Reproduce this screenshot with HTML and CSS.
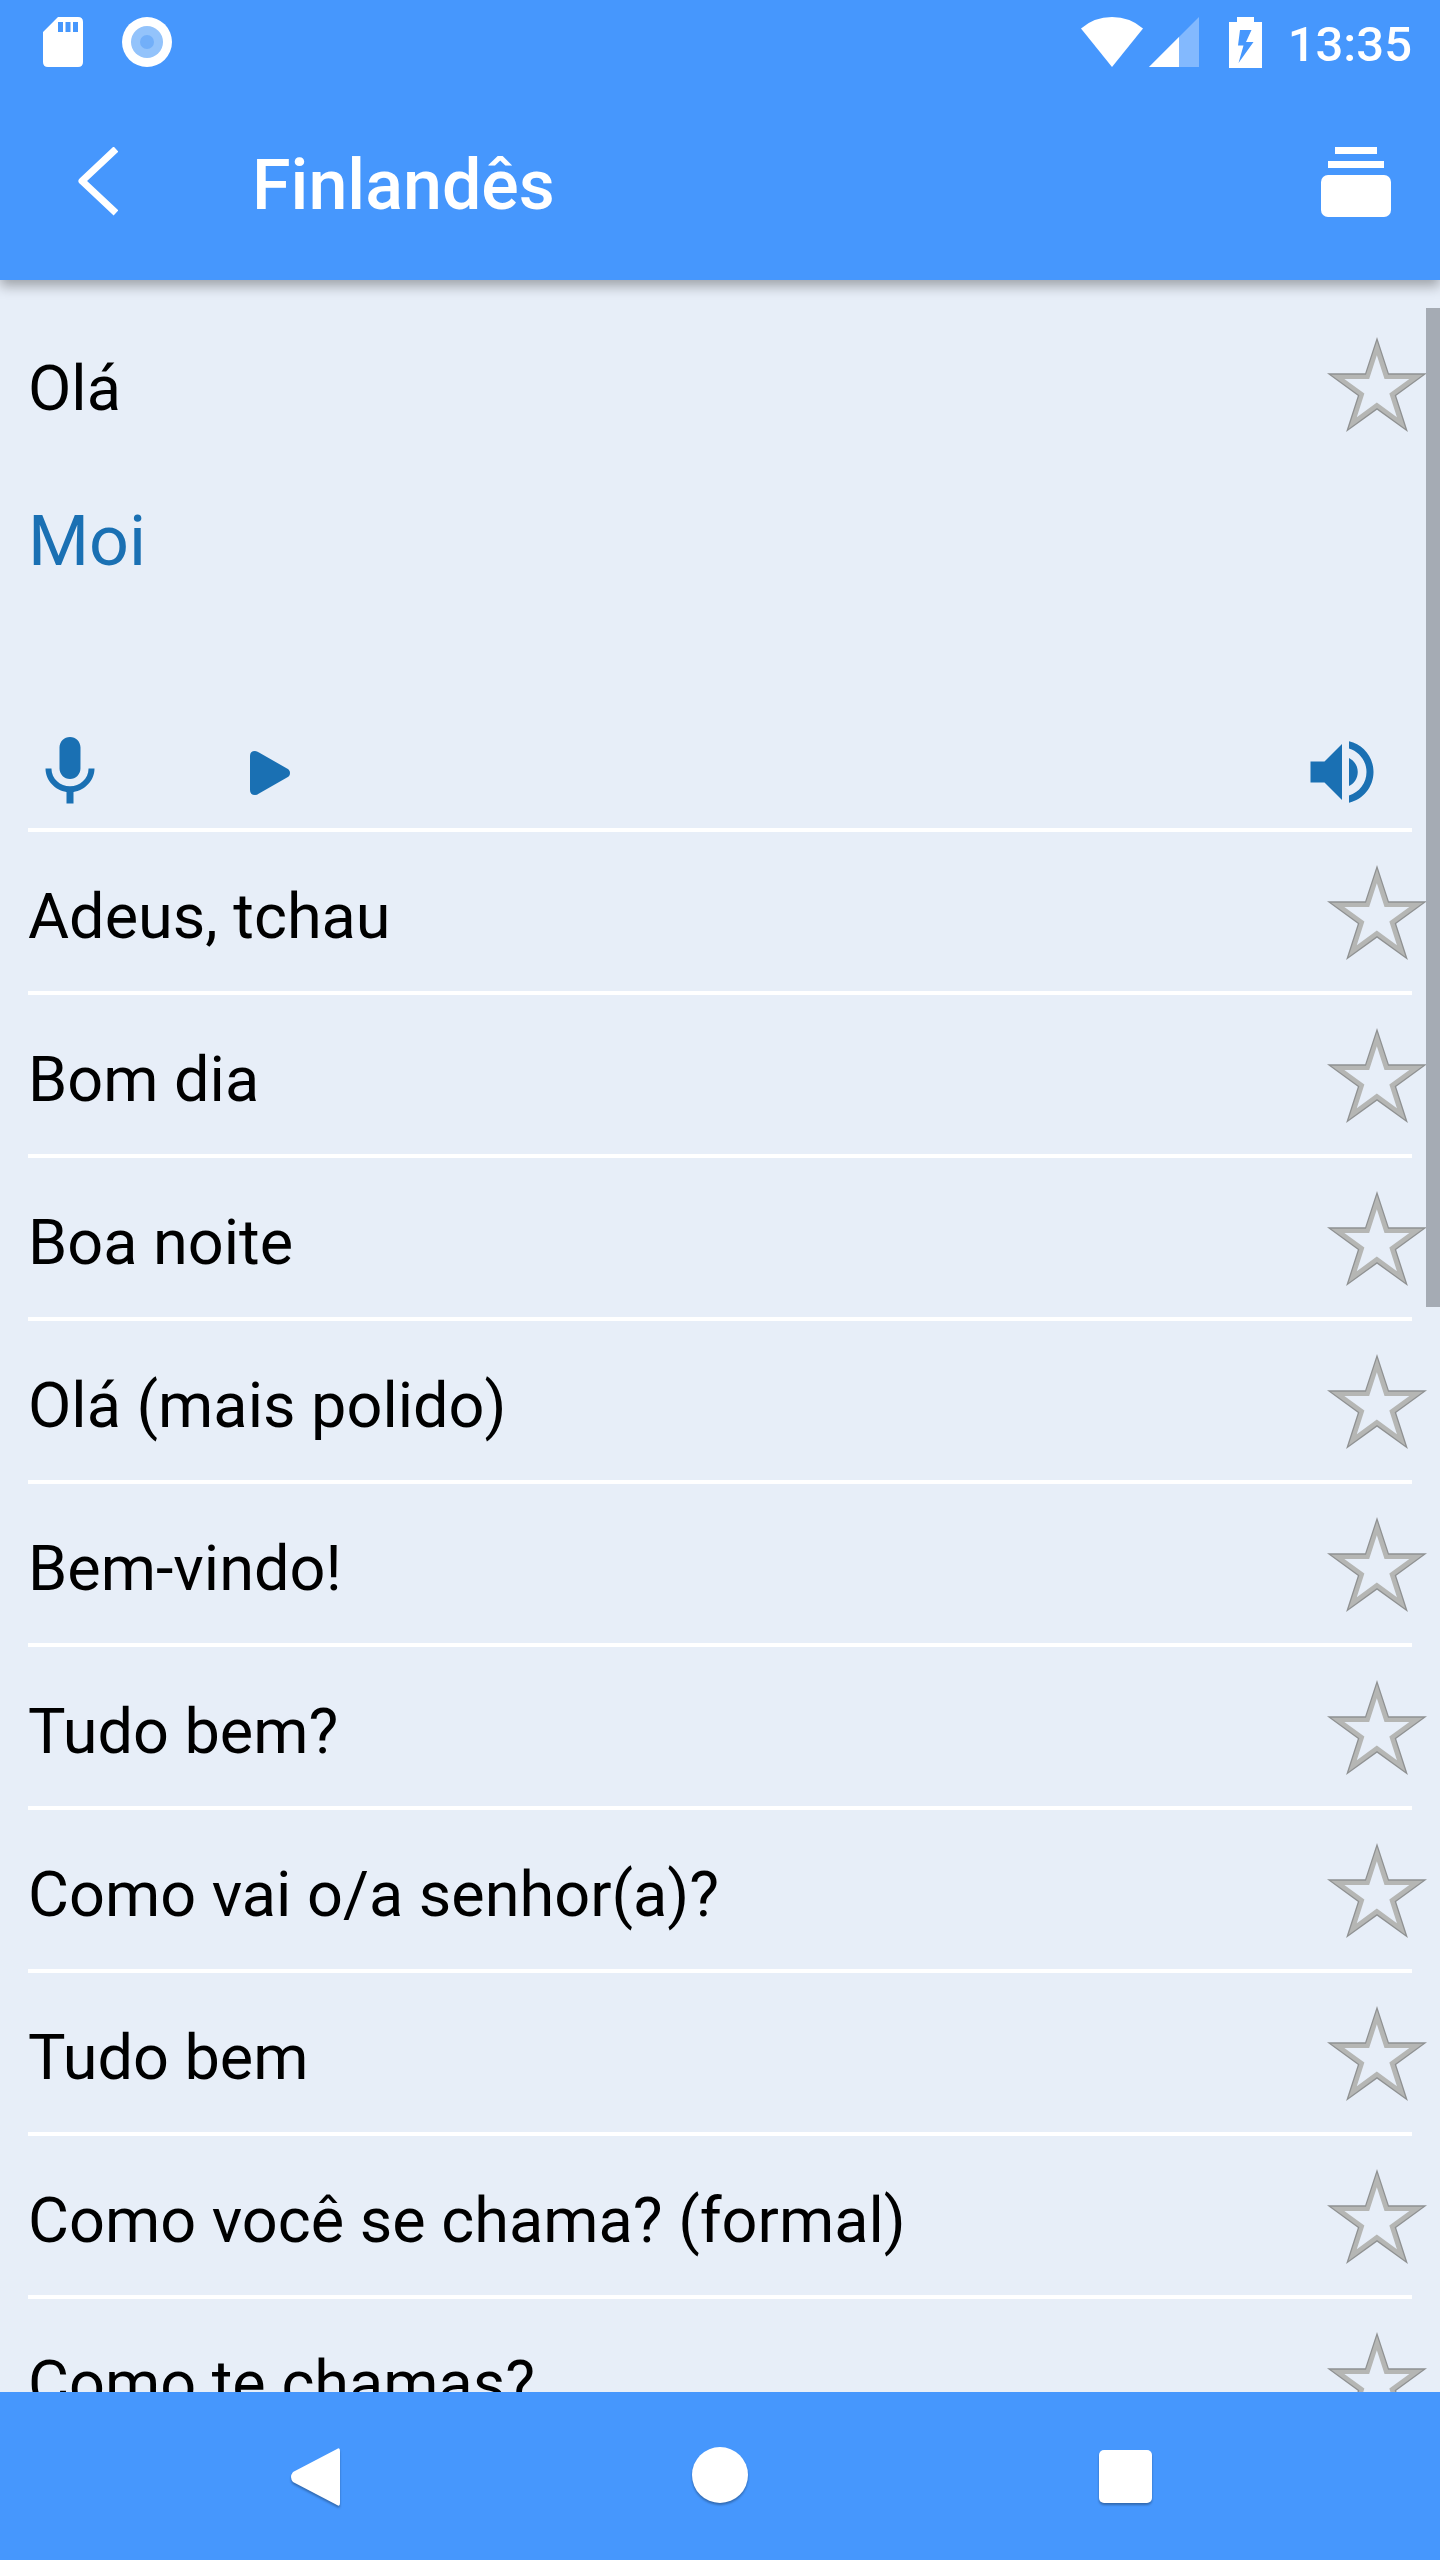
FILE: index.html
```html
<!DOCTYPE html>
<html lang="pt">
<head>
    <meta charset="UTF-8">
    <meta name="viewport" content="width=device-width, initial-scale=1.0">
    <title>Finlandês</title>
    <link rel="stylesheet" href="styles.css">
</head>
<body>
    <!-- Shared star outline -->
    <svg class="defs" aria-hidden="true">
        <symbol id="star" viewBox="0 0 98 98">
            <path fill="#8f9192" d="M49 0 60.6 35.6H98L67.8 57.6 79.3 93.200 49 71.200 18.700 93.200 30.200 57.600 0 35.600H37.400Z"/>
            <path fill="#b5b6b4" d="M49 4 59.800 37H94L66.300 57.100 76.900 89.900 49 69.700 21.100 89.900 31.700 57.100 4 37H38.200Z"/>
            <path fill="#e7eef8" transform="translate(17 18) scale(.65)" d="M49 0 60.6 35.6H98L67.8 57.6 79.3 93.200 49 71.200 18.700 93.200 30.200 57.600 0 35.600H37.400Z"/>
        </symbol>
    </svg>

    <header>
        <div class="status">
            <svg class="sd" width="40" height="50" viewBox="0 0 40 50"><path fill="#fff" fill-rule="evenodd" d="M15 0H35Q40 0 40 5V45Q40 50 35 50H5Q0 50 0 45V15ZM15 5V15H20V5ZM22.500 5V15H27.500V5ZM30 5V15H35V5Z"/></svg>
            <svg class="sync" width="50" height="50" viewBox="0 0 50 50"><circle cx="25" cy="25" r="25" fill="#fff"/><circle cx="25" cy="25" r="16" fill="#93c3fb"/><circle cx="25" cy="25" r="7" fill="#72aff9"/></svg>
            <svg class="wifi" width="62" height="50" viewBox="0 0 62 50"><path fill="#fff" d="M31 50 0 11.500Q13 0 31 0T62 11.500Z"/></svg>
            <svg class="signal" width="50" height="50" viewBox="0 0 50 50"><path fill="#83b9fe" d="M50 0V50H0Z"/><path fill="#fff" d="M30 20V50H0Z"/></svg>
            <svg class="battery" width="33" height="51" viewBox="0 0 33 51"><path fill="#fff" fill-rule="evenodd" d="M8 0H25V5H33V51H0V5H8ZM11 13 9 28.500H14.500L9.500 46 24.500 25H17L22.500 13Z"/></svg>
            <span class="time">13:35</span>
        </div>
        <div class="toolbar">
            <button type="button" class="back" aria-label="Voltar">
                <svg width="40" height="70" viewBox="0 0 40 70"><path fill="none" stroke="#fff" stroke-width="7" stroke-linejoin="round" d="M38 2 4 34 38 66"/></svg>
            </button>
            <h1>Finlandês</h1>
            <button type="button" class="cards" aria-label="Cartões">
                <svg width="70" height="70" viewBox="0 0 70 70"><path fill="#fff" d="M14 0H56V7H14ZM7 14H63V21H7Z"/><rect y="28" width="70" height="42" rx="7" fill="#fff"/></svg>
            </button>
        </div>
    </header>

    <main>
        <ul>
            <li class="open">
                <div class="phrase"><span>Olá</span><button type="button" aria-label="Favorito"><svg><use href="#star"/></svg></button></div>
                <p class="translation">Moi</p>
                <div class="actions">
                    <button type="button" aria-label="Gravar"><svg viewBox="0 0 24 24"><path d="M12 14c1.660 0 2.990-1.340 2.990-3L15 5c0-1.660-1.340-3-3-3S9 3.340 9 5v6c0 1.660 1.340 3 3 3zm5.300-3c0 3-2.540 5.100-5.300 5.100S6.700 14 6.700 11H5c0 3.410 2.720 6.230 6 6.720V21h2v-3.280c3.280-.48 6-3.300 6-6.720h-1.700z"/></svg></button>
                    <button type="button" aria-label="Reproduzir"><svg viewBox="0 0 84 84"><path d="M22 26Q22 21 27 21Q29 21 31 22.500L59 38.500Q62 40 62 43T59 47.500L31 63.500Q29 65 27 65Q22 65 22 60Z"/></svg></button>
                    <button type="button" class="listen" aria-label="Ouvir"><svg viewBox="0 0 24 24"><path d="M3 9v6h4l5 5V4L7 9H3zm13.500 3c0-1.770-1.020-3.290-2.500-4.030v8.050c1.480-.73 2.500-2.250 2.500-4.020zM14 3.230v2.060c2.890.86 5 3.540 5 6.710s-2.110 5.850-5 6.710v2.060c4.010-.91 7-4.490 7-8.770s-2.990-7.860-7-8.770z"/></svg></button>
                </div>
            </li>
            <li><div class="phrase"><span>Adeus, tchau</span><button type="button" aria-label="Favorito"><svg><use href="#star"/></svg></button></div></li>
            <li><div class="phrase"><span>Bom dia</span><button type="button" aria-label="Favorito"><svg><use href="#star"/></svg></button></div></li>
            <li><div class="phrase"><span>Boa noite</span><button type="button" aria-label="Favorito"><svg><use href="#star"/></svg></button></div></li>
            <li><div class="phrase"><span>Olá (mais polido)</span><button type="button" aria-label="Favorito"><svg><use href="#star"/></svg></button></div></li>
            <li><div class="phrase"><span>Bem-vindo!</span><button type="button" aria-label="Favorito"><svg><use href="#star"/></svg></button></div></li>
            <li><div class="phrase"><span>Tudo bem?</span><button type="button" aria-label="Favorito"><svg><use href="#star"/></svg></button></div></li>
            <li><div class="phrase"><span>Como vai o/a senhor(a)?</span><button type="button" aria-label="Favorito"><svg><use href="#star"/></svg></button></div></li>
            <li><div class="phrase"><span>Tudo bem</span><button type="button" aria-label="Favorito"><svg><use href="#star"/></svg></button></div></li>
            <li><div class="phrase"><span>Como você se chama? (formal)</span><button type="button" aria-label="Favorito"><svg><use href="#star"/></svg></button></div></li>
            <li><div class="phrase"><span>Como te chamas?</span><button type="button" aria-label="Favorito"><svg><use href="#star"/></svg></button></div></li>
        </ul>
        <div class="scrollbar"></div>
    </main>

    <nav>
        <button type="button" aria-label="Voltar"><svg viewBox="0 0 84 84"><path d="M65 17V69Q65 73 62 71L18 48Q14 43 18 38L62 15Q65 13 65 17Z"/></svg></button>
        <button type="button" aria-label="Início"><svg viewBox="0 0 84 84"><circle cx="42" cy="41" r="28"/></svg></button>
        <button type="button" aria-label="Recentes"><svg viewBox="0 0 84 84"><rect x="18" y="16" width="53" height="53" rx="5"/></svg></button>
    </nav>
</body>
</html>
```

FILE: styles.css
```css
body {
    font-family: Roboto, sans-serif;
    background-color: #e7eef8;
    color: #000;
    margin: 0;
    display: flex;
    flex-direction: column;
    height: 100vh;
    overflow: hidden;
}

button {
    display: flex;
    padding: 0;
    border: none;
    background: none;
    cursor: pointer;
}

svg {
    display: block;
}

.defs {
    position: absolute;
    width: 0;
    height: 0;
}

header {
    position: relative;
    z-index: 1;
    flex: none;
    background-color: #4697fd;
    color: #fff;
    box-shadow: 0 6px 12px rgba(0, 0, 0, 0.32);
}

.status {
    display: flex;
    align-items: center;
    height: 84px;
    padding: 0 28px 0 43px;
}

.sync {
    margin-left: 39px;
}

.wifi {
    margin-left: auto;
}

.signal {
    margin-left: 6px;
}

.battery {
    margin-left: 30px;
}

.time {
    margin-left: 26px;
    padding-top: 4px;
    font-size: 49px;
    font-weight: 500;
}

.toolbar {
    display: flex;
    align-items: center;
    height: 196px;
    padding: 0 49px 0 78px;
}

h1 {
    margin: 0 0 0 134px;
    padding-top: 6px;
    font-size: 70px;
    font-weight: 500;
}

.cards {
    margin-left: auto;
}

main {
    position: relative;
    flex: 1;
    min-height: 0;
    overflow: hidden;
}

ul {
    list-style: none;
    margin: 0;
    padding: 24px 28px 0;
}

li {
    border-bottom: 4px solid #fff;
}

.phrase {
    display: flex;
    align-items: center;
    justify-content: space-between;
    box-sizing: border-box;
    height: 159px;
    padding-top: 6px;
    margin-right: -15px;
    font-size: 63px;
}

.phrase span {
    padding-top: 4px;
}

.phrase svg {
    width: 100px;
    height: 100px;
}

.translation {
    margin: 36px 0 147px;
    font-size: 70px;
    line-height: 84px;
    color: #1a70b3;
}

.actions {
    display: flex;
    gap: 116px;
    padding: 0 28px 14px 0;
    fill: #1a70b3;
}

.actions svg {
    width: 84px;
    height: 84px;
}

.listen {
    margin-left: auto;
}

.scrollbar {
    position: absolute;
    top: 28px;
    right: 0;
    width: 14px;
    height: 47.3%;
    background-color: #a5abb4;
}

nav {
    display: flex;
    flex: none;
    align-items: center;
    justify-content: center;
    height: 168px;
    background-color: #4697fd;
}

nav button {
    width: 28%;
    justify-content: center;
}

nav svg {
    width: 84px;
    height: 84px;
    fill: #fff;
    filter: drop-shadow(0 2px 1px rgba(0, 0, 0, 0.3));
}
```
